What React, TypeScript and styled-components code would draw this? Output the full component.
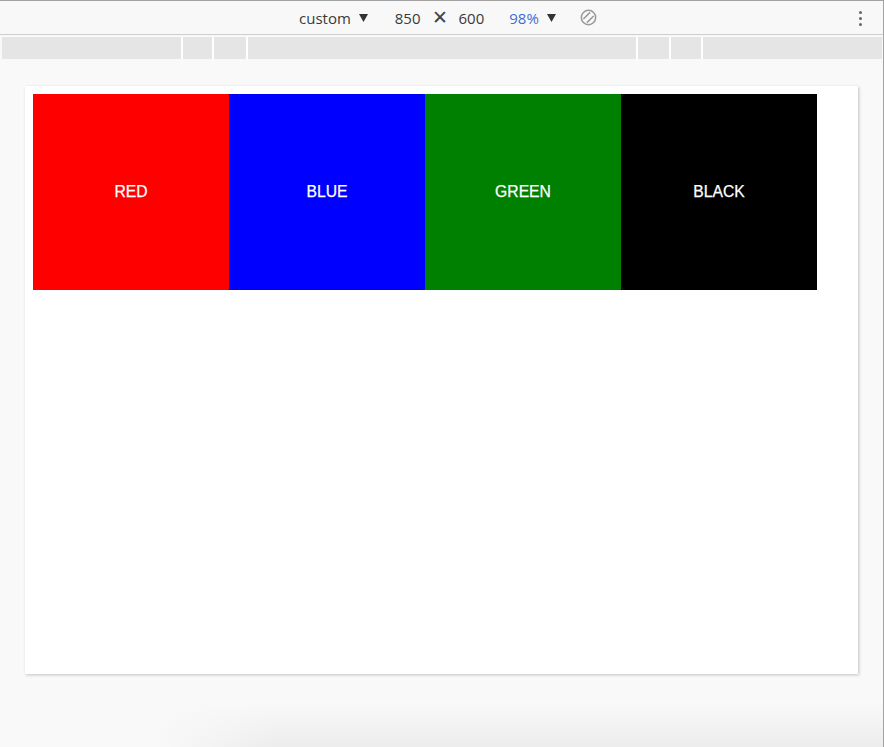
import React from "react";
import styled, { createGlobalStyle } from "styled-components";

const Global = createGlobalStyle`
  html, body { margin: 0; padding: 0; background: #f9f9f9; }
  body { font-family: "Open Sans", "Liberation Sans", sans-serif; }
`;

const Window = styled.div`
  box-sizing: border-box;
  width: 884px;
  height: 747px;
  border-top: 1px solid #a3a3a3;
  border-right: 1px solid #a3a3a3;
  background:
    linear-gradient(to right, rgba(249,249,249,1) 0px, rgba(249,249,249,1) 150px, rgba(249,249,249,0) 280px),
    linear-gradient(to bottom, #f9f9f9 0px, #f9f9f9 700px, #ececec 747px);
  display: flex;
  flex-direction: column;
  overflow: hidden;
`;

const Toolbar = styled.div`
  height: 33px;
  border-bottom: 1px solid #cdcdcd;
  background: #f8f8f8;
  display: flex;
  align-items: center;
  padding-left: 299px;
  position: relative;
  font-size: 15px;
  color: #333;
`;

const Item = styled.div<{ $ml?: number }>`
  display: flex;
  align-items: center;
  margin-left: ${(p) => p.$ml ?? 0}px;
`;

const Label = styled.span<{ $blue?: boolean }>`
  color: ${(p) => (p.$blue ? "#3b6fd6" : "#3a3a3a")};
`;

const Times = styled.span`
  font-size: 19px;
  color: #444;
  line-height: 1;
`;

const Kebab = styled.div`
  position: absolute;
  right: 21px;
  top: 10px;
  display: flex;
  flex-direction: column;
  gap: 3px;
`;

const Dot = styled.span`
  width: 3px;
  height: 3px;
  border-radius: 50%;
  background: #666;
`;

const Ruler = styled.div`
  margin: 2px 1px 0 2px;
  height: 22px;
  display: flex;
  gap: 2px;
  background: #ffffff;
`;

const Seg = styled.div<{ $w: number; $grow?: boolean }>`
  width: ${(p) => p.$w}px;
  flex: ${(p) => (p.$grow ? "1 1 auto" : "0 0 auto")};
  background: #e5e5e5;
`;

const Viewport = styled.div`
  flex: 1;
  padding: 27px 0 0 25px;
`;

const Card = styled.div`
  width: 833px;
  height: 588px;
  background: #fff;
  box-shadow: 1px 1px 3px rgba(0, 0, 0, 0.22);
  box-sizing: border-box;
  padding: 8px;
`;

const Row = styled.div`
  display: flex;
`;

const Square = styled.div<{ $bg: string }>`
  width: 196px;
  height: 196px;
  background: ${(p) => p.$bg};
  color: #fff;
  display: flex;
  align-items: center;
  justify-content: center;
  font-family: "Liberation Sans", Arial, sans-serif;
  font-size: 15.7px;
  -webkit-text-stroke: 0.25px #fff;
`;

const Caret = () => (
  <svg width="9" height="8" viewBox="0 0 9 8">
    <polygon points="0,0 9,0 4.5,8" fill="#333" />
  </svg>
);

const RotateIcon = () => (
  <svg width="17" height="17" viewBox="0 0 18 18">
    <g fill="none" stroke="#999" strokeWidth="1.6">
      <circle cx="9" cy="9" r="7.6" />
      <line x1="3.6" y1="10.6" x2="10.6" y2="3.6" />
      <line x1="7.4" y1="14.4" x2="14.4" y2="7.4" />
    </g>
  </svg>
);

const colors: { name: string; bg: string }[] = [
  { name: "RED", bg: "#ff0000" },
  { name: "BLUE", bg: "#0000ff" },
  { name: "GREEN", bg: "#008000" },
  { name: "BLACK", bg: "#000000" },
];

export default function App() {
  return (
    <>
      <Global />
      <Window>
        <Toolbar>
          <Item>
            <Label>custom</Label>
          </Item>
          <Item $ml={8}>
            <Caret />
          </Item>
          <Item $ml={27}>
            <Label>850</Label>
          </Item>
          <Item $ml={11}>
            <Times>✕</Times>
          </Item>
          <Item $ml={11}>
            <Label>600</Label>
          </Item>
          <Item $ml={25}>
            <Label $blue>98%</Label>
          </Item>
          <Item $ml={8}>
            <Caret />
          </Item>
          <Item $ml={24}>
            <RotateIcon />
          </Item>
          <Kebab>
            <Dot />
            <Dot />
            <Dot />
          </Kebab>
        </Toolbar>
        <Ruler>
          <Seg $w={179} />
          <Seg $w={29} />
          <Seg $w={32} />
          <Seg $w={388} />
          <Seg $w={31} />
          <Seg $w={30} />
          <Seg $w={176} $grow />
        </Ruler>
        <Viewport>
          <Card>
            <Row>
              {colors.map((c) => (
                <Square key={c.name} $bg={c.bg}>
                  {c.name}
                </Square>
              ))}
            </Row>
          </Card>
        </Viewport>
      </Window>
    </>
  );
}
